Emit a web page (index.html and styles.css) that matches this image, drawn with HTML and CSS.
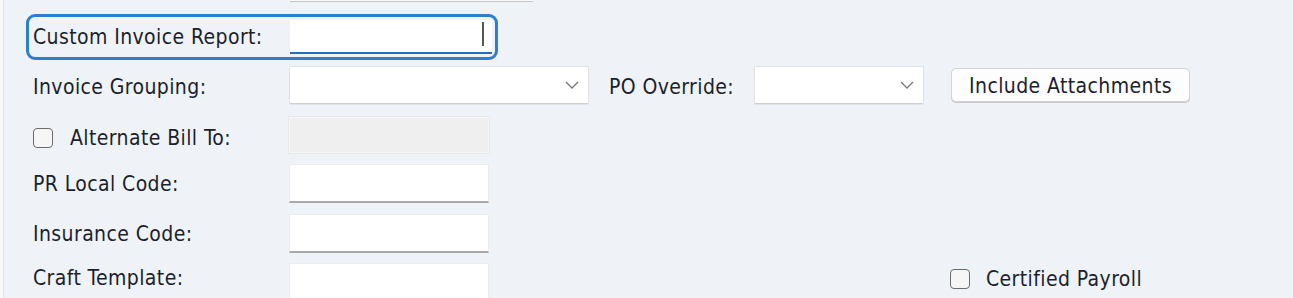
FILE: index.html
```html
<!DOCTYPE html>
<html>
<head>
<meta charset="utf-8">
<link rel="stylesheet" href="styles.css">
</head>
<body>
<div class="page">
  <div class="form">
    <div class="prev-input"></div>

    <div class="focus-ring">
      <span class="label label-focus">Custom Invoice Report:</span>
      <div class="input input-focus"><span class="caret"></span></div>
    </div>

    <div class="row row-grouping">
      <span class="label">Invoice Grouping:</span>
      <div class="select select-wide">
        <svg class="chev" width="14" height="8" viewBox="0 0 14 8"><path d="M1 1 L7 7 L13 1" fill="none" stroke="#777" stroke-width="1.3"/></svg>
      </div>
      <span class="label label-po">PO Override:</span>
      <div class="select select-narrow">
        <svg class="chev" width="14" height="8" viewBox="0 0 14 8"><path d="M1 1 L7 7 L13 1" fill="none" stroke="#777" stroke-width="1.3"/></svg>
      </div>
      <button class="btn">Include Attachments</button>
    </div>

    <div class="row row-alt">
      <span class="label check-label"><span class="checkbox"></span>Alternate Bill To:</span>
      <div class="input input-disabled"></div>
    </div>

    <div class="row row-field">
      <span class="label">PR Local Code:</span>
      <div class="input input-plain"></div>
    </div>

    <div class="row row-field">
      <span class="label">Insurance Code:</span>
      <div class="input input-plain"></div>
    </div>

    <div class="row row-field row-last">
      <span class="label label-top">Craft Template:</span>
      <div class="input input-plain"></div>
      <span class="certified"><span class="checkbox"></span>Certified Payroll</span>
    </div>
  </div>
</div>
</body>
</html>
```

FILE: styles.css
```css
html, body {
  margin: 0;
  padding: 0;
}
body {
  width: 1293px;
  height: 298px;
  overflow: hidden;
  background: #eff3f7;
  font-family: "DejaVu Sans Condensed", "DejaVu Sans", sans-serif;
  font-stretch: condensed;
  font-size: 21px;
  letter-spacing: 0.4px;
  color: #1c1f2c;
}
.page {
  height: 298px;
  border-left: 3px solid #f8f8f8;
  box-shadow: inset 1px 0 0 #e2e4e6;
  box-sizing: border-box;
}
.form {
  display: flex;
  flex-direction: column;
}
.prev-input {
  margin-left: 287px;
  width: 243px;
  height: 1px;
  background: #fafafa;
  border-bottom: 1px solid #c4c6c8;
}
.focus-ring {
  margin-top: 12px;
  margin-left: 23px;
  width: 472px;
  height: 46px;
  box-sizing: border-box;
  border: 3px solid #2c7fca;
  border-radius: 9px;
  display: flex;
  align-items: center;
  padding-left: 4px;
}
.label {
  width: 256px;
  flex: none;
  white-space: nowrap;
}
.label-focus {
  width: 257px;
}
.input {
  box-sizing: border-box;
  width: 200px;
  background: #fff;
  flex: none;
}
.input-focus {
  width: 202px;
  height: 34px;
  border-bottom: 2px solid #1f6fc2;
  position: relative;
}
.caret {
  position: absolute;
  right: 8px;
  top: 2px;
  width: 2px;
  height: 24px;
  background: #555;
}
.row {
  display: flex;
  align-items: center;
  padding-left: 30px;
}
.row-grouping {
  margin-top: 6px;
  height: 38px;
}
.row-grouping .label {
  padding-top: 3px;
}
.select {
  box-sizing: border-box;
  height: 38px;
  background: #fff;
  border: 1px solid #e2e2e2;
  border-bottom-color: #cfcfcf;
  border-radius: 2px;
  box-shadow: 0 1px 1px rgba(0,0,0,0.06);
  display: flex;
  align-items: center;
  justify-content: flex-end;
  padding-right: 9px;
  flex: none;
}
.select-wide {
  width: 300px;
}
.select-narrow {
  width: 170px;
}
.label-po {
  width: 145px;
  margin-left: 20px;
}
.btn {
  margin-left: 27px;
  width: 239px;
  height: 34px;
  background: #fdfdfd;
  border: 1px solid #d3d3d3;
  border-radius: 5px;
  box-shadow: 0 1px 0 #c8c8c8;
  font: inherit;
  font-stretch: condensed;
  letter-spacing: 0.4px;
  color: #1c1f2c;
  padding: 2px 0 0;
}
.row-alt {
  margin-top: 13px;
  height: 36px;
}
.check-label {
  display: flex;
  align-items: center;
  padding-top: 5px;
}
.checkbox {
  box-sizing: border-box;
  width: 20px;
  height: 20px;
  border: 1.5px solid #6b6b6b;
  border-radius: 4px;
  background: #f6f6f6;
  margin-right: 17px;
  flex: none;
}
.input-disabled {
  height: 36px;
  background: #efefef;
  border: 1px solid #f6f6f6;
  box-shadow: 0 0 0 1px #e6e8ea;
}
.row-field {
  margin-top: 11px;
  height: 39px;
}
.input-plain {
  height: 39px;
  border: 1px solid #ececec;
  border-bottom: 2px solid #a9a9a9;
}
.row-last {
  margin-top: 10px;
}
.label-top {
  align-self: flex-start;
  margin-top: 3px;
}
.certified {
  display: flex;
  align-items: center;
  margin-left: 461px;
  margin-top: -8px;
  white-space: nowrap;
}
.certified .checkbox {
  margin-right: 16px;
}
```
